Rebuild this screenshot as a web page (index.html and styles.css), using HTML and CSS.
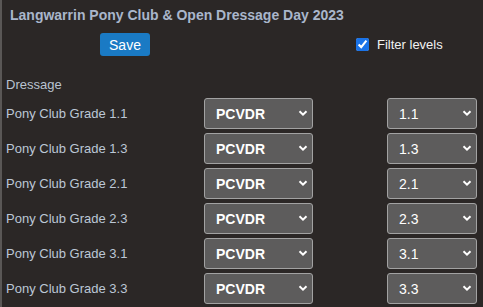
FILE: index.html
```html
<!DOCTYPE html>
<html lang="en">
<head>
    <meta charset="UTF-8">
    <meta name="viewport" content="width=device-width, initial-scale=1.0">
    <title>Dressage Levels</title>
    <link rel="stylesheet" href="styles.css">
</head>
<body>

    <div class="page">
        <h1 class="title">Langwarrin Pony Club &amp; Open Dressage Day 2023</h1>

        <div class="toolbar">
            <button class="save">Save</button>
            <label class="filter">
                <input type="checkbox" checked>
                <span>Filter levels</span>
            </label>
        </div>

        <div class="section">Dressage</div>

        <div class="rows">
            <div class="label">Pony Club Grade 1.1</div>
            <div class="pick wide"><select><option>PCVDR</option></select><svg viewBox="0 0 10 6"><path d="M1.5 1.2 L5 4.6 L8.5 1.2"/></svg></div>
            <div class="pick"><select><option>1.1</option></select><svg viewBox="0 0 10 6"><path d="M1.5 1.2 L5 4.6 L8.5 1.2"/></svg></div>

            <div class="label">Pony Club Grade 1.3</div>
            <div class="pick wide"><select><option>PCVDR</option></select><svg viewBox="0 0 10 6"><path d="M1.5 1.2 L5 4.6 L8.5 1.2"/></svg></div>
            <div class="pick"><select><option>1.3</option></select><svg viewBox="0 0 10 6"><path d="M1.5 1.2 L5 4.6 L8.5 1.2"/></svg></div>

            <div class="label">Pony Club Grade 2.1</div>
            <div class="pick wide"><select><option>PCVDR</option></select><svg viewBox="0 0 10 6"><path d="M1.5 1.2 L5 4.6 L8.5 1.2"/></svg></div>
            <div class="pick"><select><option>2.1</option></select><svg viewBox="0 0 10 6"><path d="M1.5 1.2 L5 4.6 L8.5 1.2"/></svg></div>

            <div class="label">Pony Club Grade 2.3</div>
            <div class="pick wide"><select><option>PCVDR</option></select><svg viewBox="0 0 10 6"><path d="M1.5 1.2 L5 4.6 L8.5 1.2"/></svg></div>
            <div class="pick"><select><option>2.3</option></select><svg viewBox="0 0 10 6"><path d="M1.5 1.2 L5 4.6 L8.5 1.2"/></svg></div>

            <div class="label">Pony Club Grade 3.1</div>
            <div class="pick wide"><select><option>PCVDR</option></select><svg viewBox="0 0 10 6"><path d="M1.5 1.2 L5 4.6 L8.5 1.2"/></svg></div>
            <div class="pick"><select><option>3.1</option></select><svg viewBox="0 0 10 6"><path d="M1.5 1.2 L5 4.6 L8.5 1.2"/></svg></div>

            <div class="label">Pony Club Grade 3.3</div>
            <div class="pick wide"><select><option>PCVDR</option></select><svg viewBox="0 0 10 6"><path d="M1.5 1.2 L5 4.6 L8.5 1.2"/></svg></div>
            <div class="pick"><select><option>3.3</option></select><svg viewBox="0 0 10 6"><path d="M1.5 1.2 L5 4.6 L8.5 1.2"/></svg></div>
        </div>
    </div>

</body>
</html>
```

FILE: styles.css
```css
body {
    margin: 0;
    background-color: #2b2726;
    font-family: "Liberation Sans", Arial, sans-serif;
    height: 100vh;
    overflow: hidden;
}

.page {
    border-left: 2px solid #5a5756;
    min-height: 100vh;
    padding: 0 0 0 4px;
    box-sizing: border-box;
}

.title {
    margin: 0;
    padding: 7px 0 0 4px;
    font-size: 14px;
    font-weight: bold;
    color: #a9b6cb;
    line-height: 16px;
}

.toolbar {
    display: flex;
    align-items: center;
    padding: 10px 0 0 94px;
    height: 23px;
}

.save {
    width: 50px;
    height: 23px;
    background-color: #1a7ac4;
    color: #fff;
    border: none;
    border-radius: 3px;
    font-family: inherit;
    font-size: 14px;
    padding: 0;
    cursor: pointer;
}

.filter {
    display: flex;
    align-items: center;
    margin-left: 206px;
    color: #f2f2f2;
    font-size: 13px;
}

.filter input {
    width: 13px;
    height: 13px;
    margin: 0 8px 0 0;
    accent-color: #1a73e8;
}

.section {
    margin-top: 21px;
    font-size: 13px;
    color: #b9c3d1;
    line-height: 16px;
}

.rows {
    display: grid;
    grid-template-columns: 198px 183px 90px;
    row-gap: 4px;
    margin-top: 5px;
    align-items: center;
}

.label {
    font-size: 13px;
    color: #bcc7d6;
}

.pick {
    position: relative;
    height: 31px;
}

.pick.wide {
    width: 109px;
}

.pick select {
    appearance: none;
    width: 100%;
    height: 31px;
    background-color: #5d5c5c;
    border: 1px solid #a2a2a2;
    border-radius: 3px;
    color: #fff;
    font-family: inherit;
    font-size: 14px;
    padding: 0 0 0 11px;
}

.pick.wide select {
    font-weight: bold;
}

.pick svg {
    position: absolute;
    right: 5px;
    top: 12px;
    width: 10px;
    height: 6px;
    pointer-events: none;
}

.pick path {
    fill: none;
    stroke: #fff;
    stroke-width: 2;
}
```
